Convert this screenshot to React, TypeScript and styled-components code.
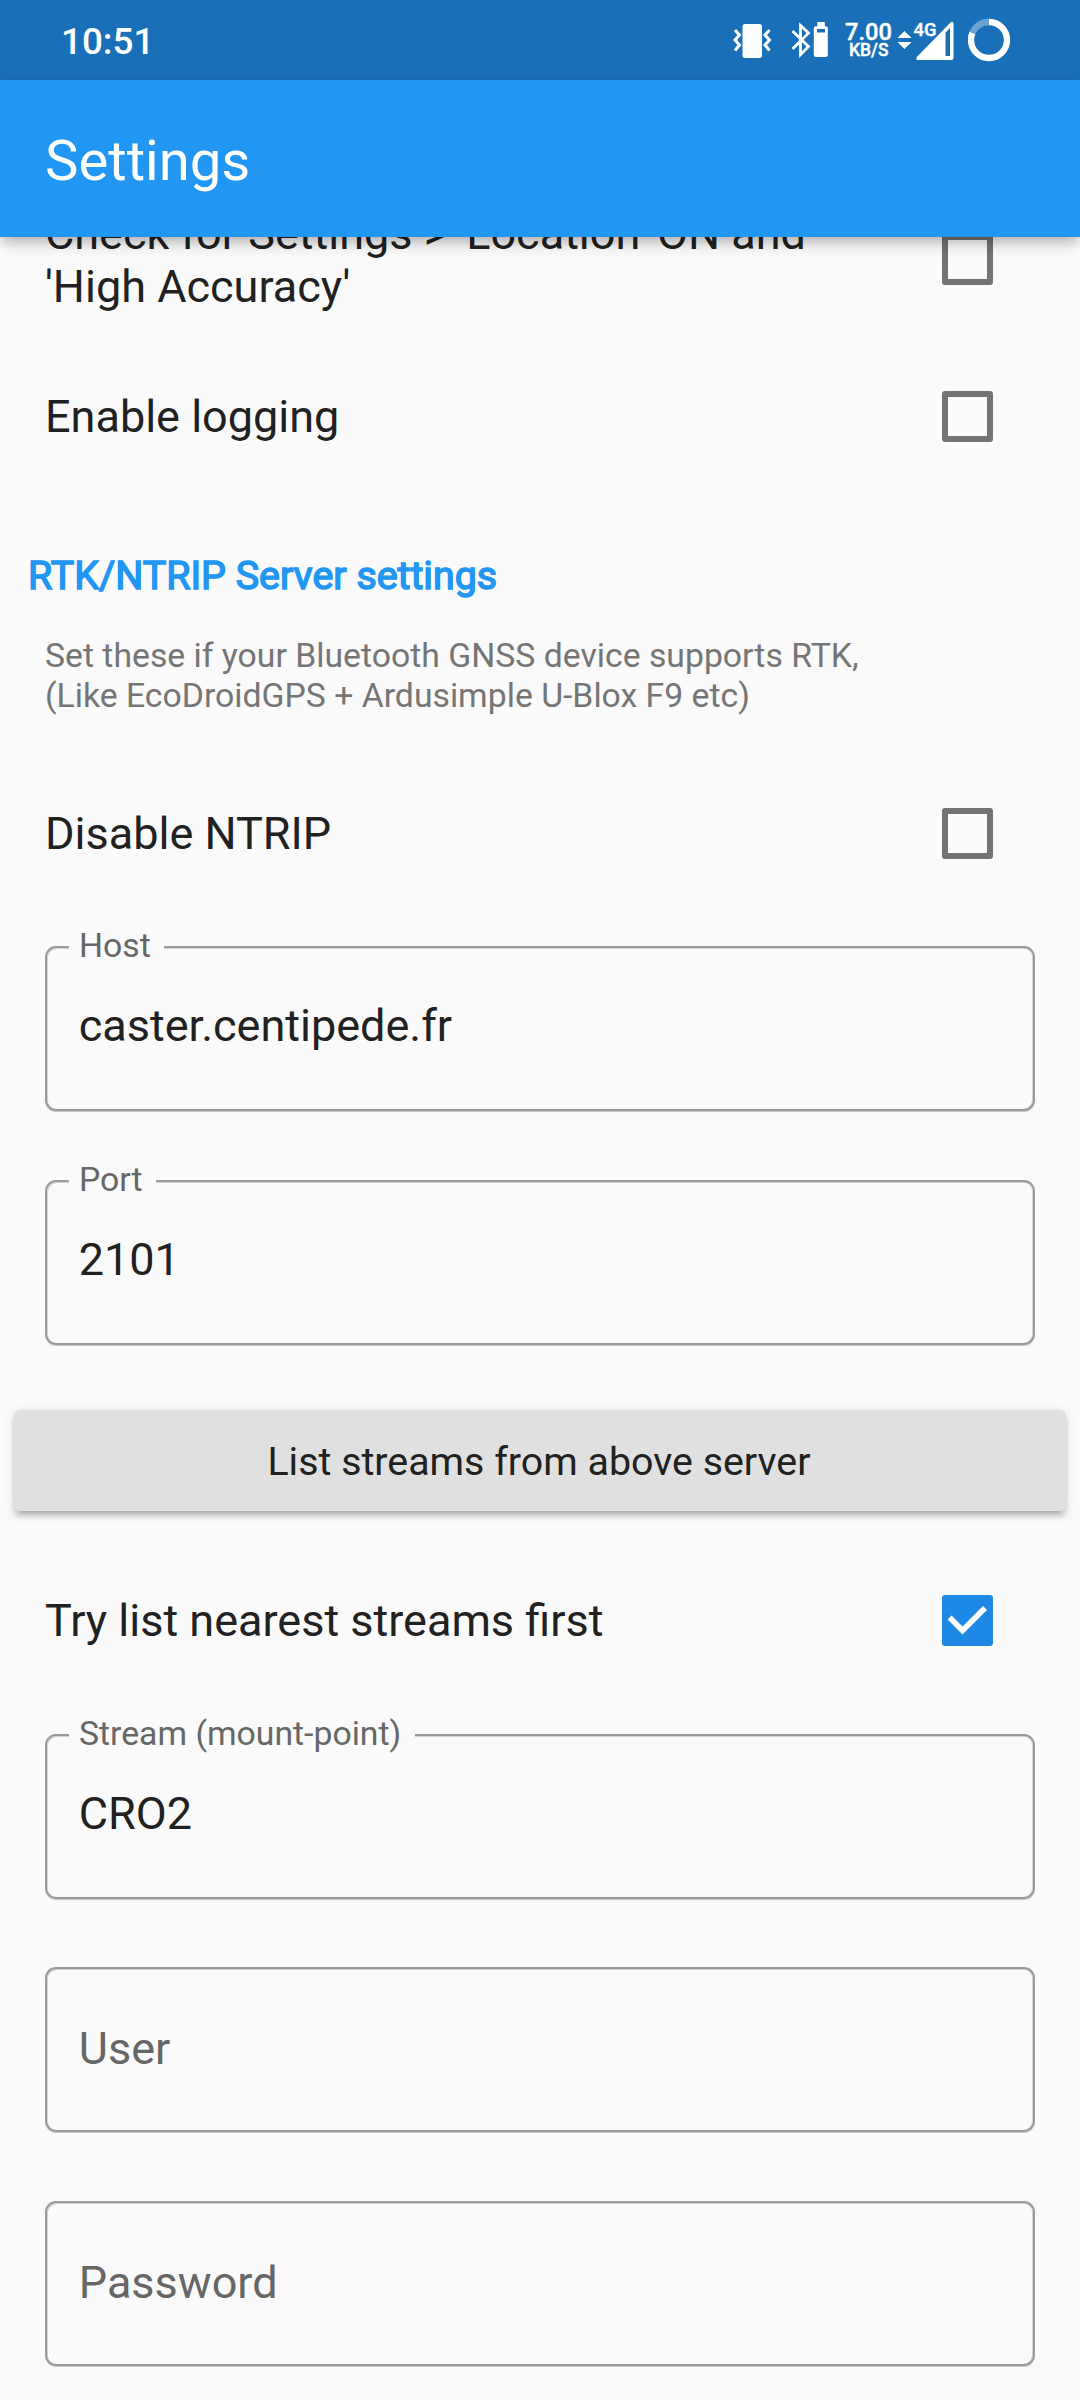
import React from "react";
import styled, { createGlobalStyle } from "styled-components";

const GlobalStyle = createGlobalStyle`
  *, *::before, *::after { box-sizing: border-box; }
  html, body { margin: 0; padding: 0; background: #fafafa; }
  body { font-family: Roboto, "Noto Sans", sans-serif; color: #212121; overflow: hidden; }
`;

const Screen = styled.div`
  width: 1080px;
  height: 2400px;
  overflow: hidden;
  display: flex;
  flex-direction: column;
  background: #fafafa;
`;

const StatusBar = styled.header`
  flex: none;
  height: 80px;
  padding: 0 69px 0 61px;
  display: flex;
  align-items: center;
  justify-content: space-between;
  background: #1a70b8;
  color: #fff;
`;

const Clock = styled.time`
  font-size: 36.8px;
  line-height: 44px;
  font-weight: 500;
  margin-top: 4px;
`;

const StatusIcons = styled.div`
  display: flex;
  height: 80px;
`;

const AppBar = styled.div`
  flex: none;
  position: relative;
  z-index: 1;
  height: 157px;
  padding: 0 45px;
  display: flex;
  align-items: center;
  background: #2196f3;
  box-shadow: 0 5.6px 11.25px -2.8px rgba(0, 0, 0, 0.2), 0 11.25px 14px rgba(0, 0, 0, 0.06),
    0 2.8px 16px rgba(0, 0, 0, 0.1);
`;

const Title = styled.h1`
  margin: 5.5px 0 0;
  color: #fff;
  font-size: 56.25px;
  line-height: 66px;
  font-weight: 400;
`;

const List = styled.main`
  display: flex;
  flex-direction: column;
  margin-top: -56.5px;
`;

const Row = styled.label`
  flex: none;
  height: 157.5px;
  padding: 0 87px 0 45px;
  display: flex;
  align-items: center;
  justify-content: space-between;
`;

const RowText = styled.span<{ $twoLine?: boolean }>`
  width: 800px;
  padding-top: ${(p) => (p.$twoLine ? 2 : 0)}px;
  font-size: 45px;
  line-height: 53px;
`;

const Box = styled.span<{ $checked?: boolean }>`
  flex: none;
  width: 51px;
  height: 51px;
  border: ${(p) => (p.$checked ? "0" : "6px solid #737373")};
  border-radius: 3px;
  background: ${(p) => (p.$checked ? "#1e88e5" : "transparent")};
  display: flex;
`;

const SectionTitle = styled.h2`
  margin: 57px 28px 0;
  font-size: 39.375px;
  line-height: 46px;
  font-weight: 400;
  color: #2196f3;
  -webkit-text-stroke: 1.5px #2196f3;
`;

const Description = styled.p`
  margin: 37px 45px 39.5px;
  font-size: 33.75px;
  line-height: 40px;
  color: #757575;
`;

const Fields = styled.div<{ $top: number; $gap: number }>`
  display: flex;
  flex-direction: column;
  gap: ${(p) => p.$gap}px;
  padding: 0 45px;
  margin-top: ${(p) => p.$top}px;
`;

const Field = styled.div`
  position: relative;
  height: 165px;
  padding: 0 31.75px;
  display: flex;
  align-items: center;
  border: 2px solid #9a9a9a;
  border-radius: 11px;
  box-shadow: inset 1px 1px 0 rgba(0, 0, 0, 0.16), inset -1px 0 0 rgba(0, 0, 0, 0.16),
    0 1px 0 rgba(0, 0, 0, 0.2);
`;

const FieldLabel = styled.span`
  position: absolute;
  left: 22px;
  top: -22px;
  padding: 0 13.5px 0 10px;
  background: #fafafa;
  color: #676767;
  font-size: 33.75px;
  line-height: 40px;
`;

const Value = styled.span<{ $hint?: boolean }>`
  font-size: 45px;
  line-height: 53px;
  color: ${(p) => (p.$hint ? "#666" : "#212121")};
  margin-top: ${(p) => (p.$hint ? -2 : -7)}px;
`;

const StreamsButton = styled.button`
  margin: 65px 14px 0;
  height: 101px;
  padding: 2px 2px 0 0;
  border: 0;
  border-radius: 5.6px;
  background: #e0e0e0;
  color: #212121;
  font-family: inherit;
  font-size: 39.375px;
  line-height: 46px;
  box-shadow: 0 8px 3px -5.6px rgba(0, 0, 0, 0.2), 0 5.6px 5.6px rgba(0, 0, 0, 0.14),
    0 2.8px 12px rgba(0, 0, 0, 0.1);
`;

const NearestRow = styled(Row)`
  margin-top: 31px;
`;

function CheckBox({ checked = false }: { checked?: boolean }) {
  return (
    <Box $checked={checked}>
      {checked && (
        <svg width="51" height="51" viewBox="0 0 51 51" fill="none" stroke="#fff" strokeWidth="5.6">
          <path d="M7.6 22.6 L20.5 35.5 L43 13" />
        </svg>
      )}
    </Box>
  );
}

function TextField({ label, value }: { label: string; value?: string }) {
  return (
    <Field>
      {value && <FieldLabel>{label}</FieldLabel>}
      <Value $hint={!value}>{value || label}</Value>
    </Field>
  );
}

function StatusGlyphs() {
  return (
    <svg width="291" height="80" viewBox="720 0 291 80" fill="#fff" fontFamily="Roboto, sans-serif">
      <rect x="742.5" y="24" width="19.5" height="34" rx="2.5" />
      <g fill="none" stroke="#fff" strokeWidth="3">
        <path d="M735 30l4.500 5-4.500 5 4.500 5-4.500 5.500" />
        <path d="M769.500 30l-4.500 5 4.500 5-4.500 5 4.500 5.500" />
        <path d="M792.500 31l16 15.500-8 8v-29l8 7.500-16 16" strokeWidth="2.800" />
      </g>
      <path
        fillRule="evenodd"
        d="M817.300 22h7.500v4.300h1a2 2 0 0 1 2 2V55a2 2 0 0 1-2 2h-10a2 2 0 0 1-2-2V28.300a2 2 0 0 1 2-2h1.500zM817 29v3.500h8V29z"
      />
      <g fontWeight="500" stroke="#fff" strokeWidth="0.4">
        <text x="845" y="40" fontSize="24" textLength="47" lengthAdjust="spacingAndGlyphs">7.00</text>
        <text x="849" y="56" fontSize="17.500" textLength="39.500" lengthAdjust="spacingAndGlyphs">KB/S</text>
        <text x="913.500" y="36" fontSize="19" textLength="23" lengthAdjust="spacingAndGlyphs">4G</text>
      </g>
      <path d="M897.500 38l7-7 7 7zM897.500 42h14l-7 7z" />
      <path
        fillRule="evenodd"
        d="M917 56.800L950.500 22.500Q953.500 20.500 953.500 24V57.500Q953.500 60 951 60H918Q915 60 917 56.800zM945.500 32.500V56h4.500V28z"
      />
      <g fill="none" strokeWidth="6.300">
        <circle cx="989" cy="40" r="18" stroke="#fff" />
        <path d="M989 22A18 18 0 0 0 972.500 32.800" stroke="#1a70b8" strokeWidth="7" />
        <path d="M989 22A18 18 0 0 0 972.500 32.800" stroke="#6ba2d2" />
      </g>
    </svg>
  );
}

export default function App() {
  return (
    <Screen>
      <GlobalStyle />
      <StatusBar>
        <Clock>10:51</Clock>
        <StatusIcons>
          <StatusGlyphs />
        </StatusIcons>
      </StatusBar>
      <AppBar>
        <Title>Settings</Title>
      </AppBar>
      <List>
        <Row>
          <RowText $twoLine>Check for Settings &gt; 'Location' ON and 'High Accuracy'</RowText>
          <CheckBox />
        </Row>
        <Row>
          <RowText>Enable logging</RowText>
          <CheckBox />
        </Row>
        <SectionTitle>RTK/NTRIP Server settings</SectionTitle>
        <Description>
          Set these if your Bluetooth GNSS device supports RTK,
          <br />
          (Like EcoDroidGPS + Ardusimple U-Blox F9 etc)
        </Description>
        <Row>
          <RowText>Disable NTRIP</RowText>
          <CheckBox />
        </Row>
        <Fields $top={33.5} $gap={69}>
          <TextField label="Host" value="caster.centipede.fr" />
          <TextField label="Port" value="2101" />
        </Fields>
        <StreamsButton>List streams from above server</StreamsButton>
        <NearestRow>
          <RowText>Try list nearest streams first</RowText>
          <CheckBox checked />
        </NearestRow>
        <Fields $top={34.5} $gap={68.3}>
          <TextField label="Stream (mount-point)" value="CRO2" />
          <TextField label="User" />
          <TextField label="Password" />
        </Fields>
      </List>
    </Screen>
  );
}
